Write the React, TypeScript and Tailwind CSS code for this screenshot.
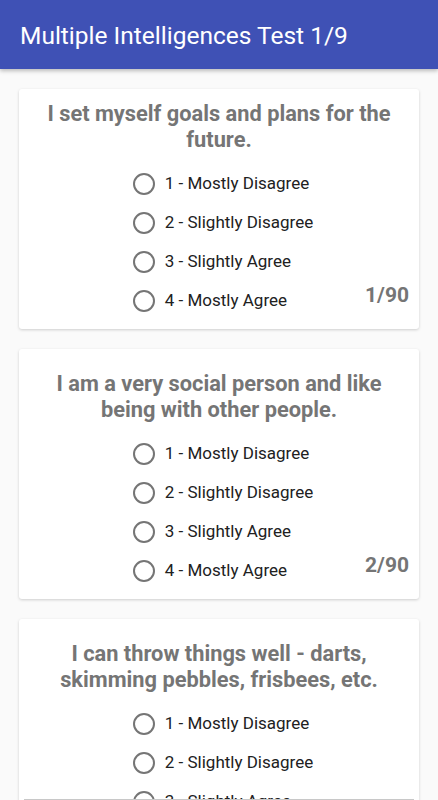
const options = [
  "1 - Mostly Disagree",
  "2 - Slightly Disagree",
  "3 - Slightly Agree",
  "4 - Mostly Agree",
];

const questions = [
  "I set myself goals and plans for the future.",
  "I am a very social person and like being with other people.",
  "I can throw things well - darts, skimming pebbles, frisbees, etc.",
];

function Radio({ label }: { label: string }) {
  return (
    <div className="flex h-[39px] items-center">
      <span className="h-[22px] w-[22px] shrink-0 rounded-full border-2 border-[#757575]" />
      <span className="ml-[10px] text-[17px] text-[#212121]">{label}</span>
    </div>
  );
}

function QuestionCard({ text, index, first }: { text: string; index: number; first: boolean }) {
  return (
    <div
      className={`relative mx-[19px] rounded-[3px] bg-white shadow-[0_1px_3px_rgba(0,0,0,0.18)] ${
        first ? "pt-[12px] pb-[9px]" : "pt-[22px] pb-[9px]"
      }`}
    >
      <p className="px-5 text-center text-[21.8px] font-bold leading-[26px] text-[#757575]">{text}</p>
      <div className="mt-[11px] flex justify-center">
        <div className="ml-[8px]">
          {options.map((o) => (
            <Radio key={o} label={o} />
          ))}
        </div>
      </div>
      <span className="absolute right-[10px] bottom-[18px] text-[21px] font-bold text-[#757575]">
        {index}/90
      </span>
    </div>
  );
}

export default function App() {
  return (
    <div
      className="relative h-[800px] overflow-hidden bg-[#fafafa]"
      style={{ fontFamily: "Roboto, 'Noto Sans', sans-serif" }}
    >
      <header className="relative z-10 flex h-[69px] items-center bg-[#3f51b5] px-5 pt-[3px] shadow-[0_2px_4px_rgba(0,0,0,0.25)]">
        <h1 className="text-[24.5px] text-white">Multiple Intelligences Test 1/9</h1>
      </header>
      <div className="flex flex-col gap-[20px] pt-[20px]">
        {questions.map((q, i) => (
          <QuestionCard key={q} text={q} index={i + 1} first={i === 0} />
        ))}
      </div>
      <div className="absolute bottom-0 left-[24px] right-[24px] h-px bg-[#c8c8c8]" />
    </div>
  );
}
